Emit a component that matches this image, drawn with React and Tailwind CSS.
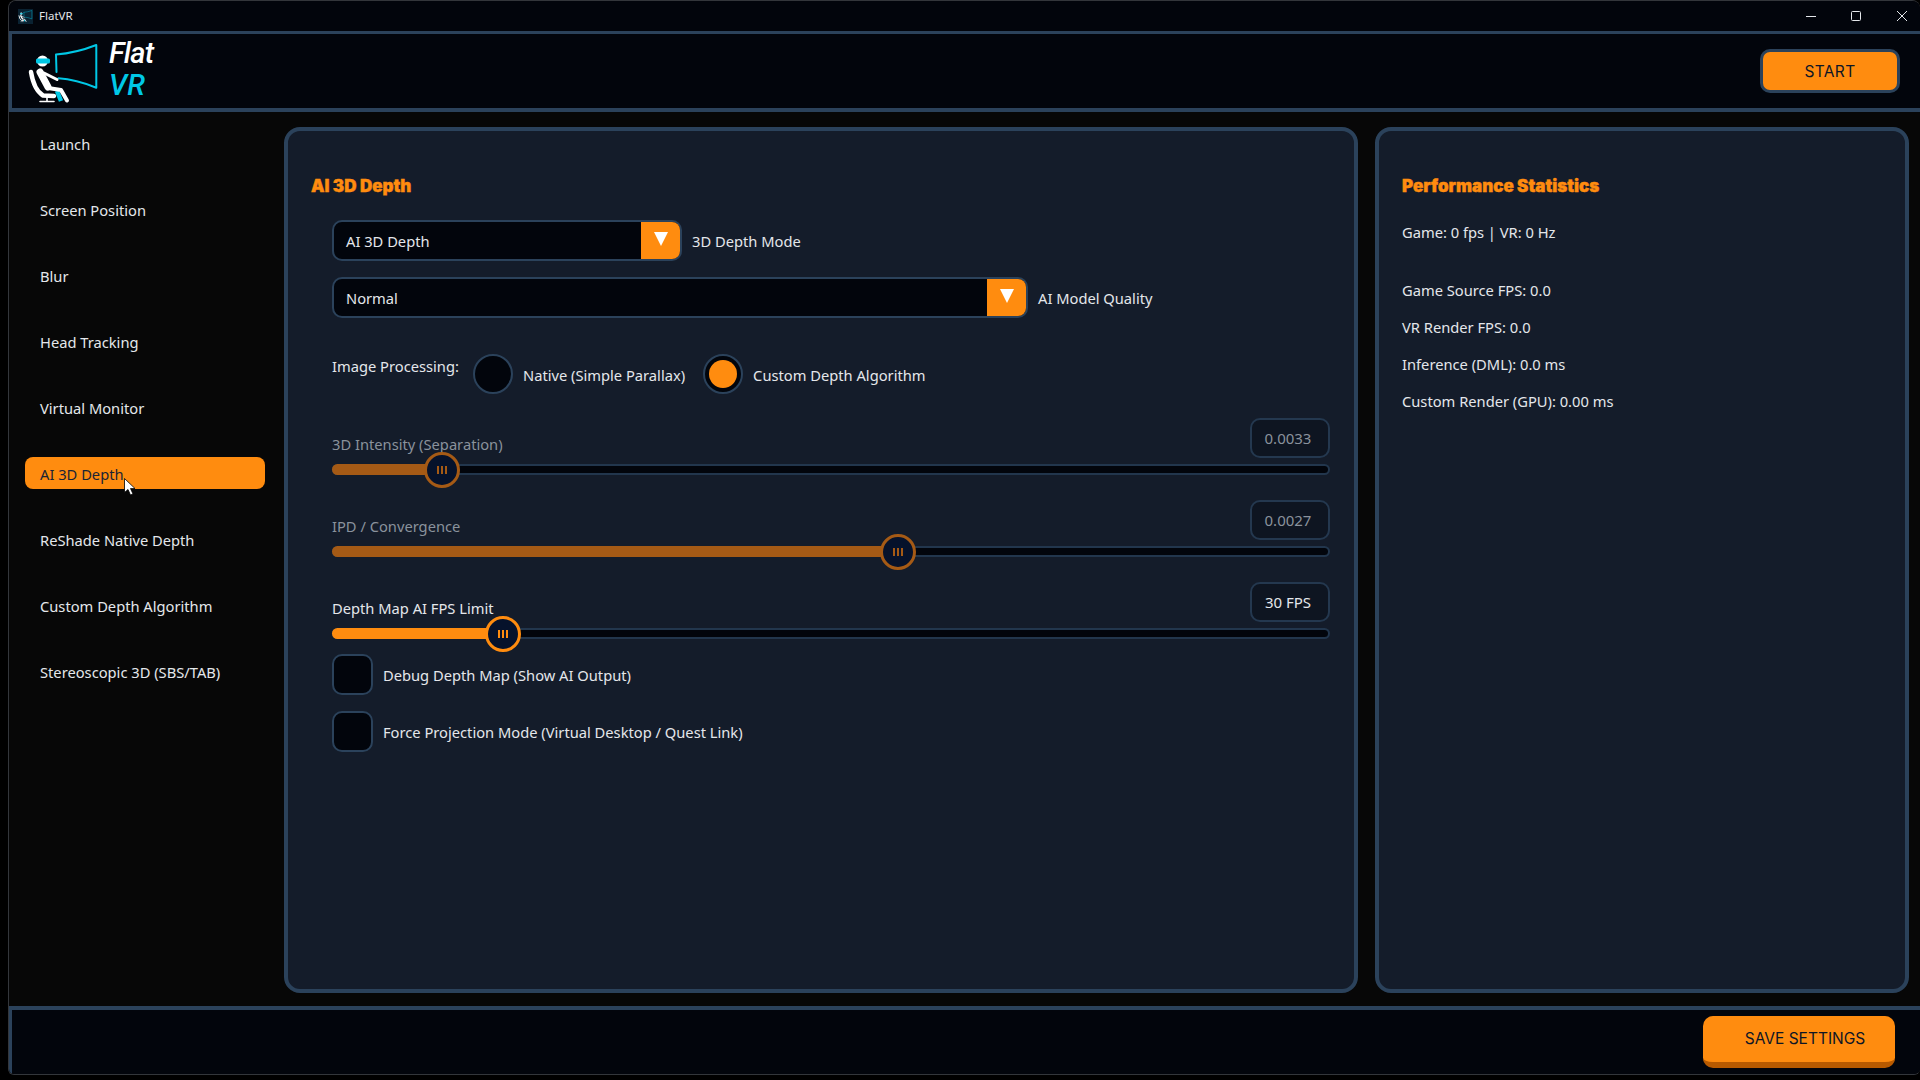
import React from 'react';

const navItems = [
  'Launch',
  'Screen Position',
  'Blur',
  'Head Tracking',
  'Virtual Monitor',
  'AI 3D Depth',
  'ReShade Native Depth',
  'Custom Depth Algorithm',
  'Stereoscopic 3D (SBS/TAB)',
];

const sliders = [
  { label: '3D Intensity (Separation)', value: '0.0033', pos: 110, disabled: true },
  { label: 'IPD / Convergence', value: '0.0027', pos: 566, disabled: true },
  { label: 'Depth Map AI FPS Limit', value: '30 FPS', pos: 171, disabled: false },
];

const Logo = ({ className }) => (
  <svg className={className} viewBox="0 0 76 64" fill="none">
    <path d="M30 13.5Q50 12 70.3 4V46.7Q50 38.5 32.5 37.3M30 13.5L30.5 31" stroke="#00c8e6" strokeWidth="2" strokeLinejoin="round" strokeLinecap="round" />
    <path d="M31 50L35 60" stroke="#00c8e6" strokeWidth="4.5" />
    <circle cx="16.5" cy="20" r="5.5" fill="#fff" />
    <rect x="10" y="17.5" width="14" height="5" rx="1.5" fill="#00c8e6" />
    <path d="M14 31L22 46" stroke="#fff" strokeWidth="7" strokeLinecap="round" />
    <path d="M18 32L31 38.5" stroke="#fff" strokeWidth="3" strokeLinecap="round" />
    <path d="M22 47L35 49L41 59.5" stroke="#fff" strokeWidth="4" strokeLinecap="round" strokeLinejoin="round" />
    <path d="M5 31Q8 49 17 54.5L28 55" stroke="#fff" strokeWidth="4.5" strokeLinecap="round" />
    <path d="M21 56V60M14 60.5H28" stroke="#fff" strokeWidth="1.6" strokeLinecap="round" />
  </svg>
);

const Dropdown = ({ text, width }) => (
  <div className={`flex h-[41px] ${width} overflow-hidden rounded-[10px] border-2 border-[#2b425b] bg-[#02050c]`}>
    <div className="flex flex-1 items-center pt-[2px] pl-3 text-[#e4e7eb]">{text}</div>
    <div className="flex w-[39px] items-center justify-center bg-[#ff8c0f]">
      <svg className="mb-1 h-[14px] w-[14px]" viewBox="0 0 14 14">
        <path d="M0 0H14L7 14Z" fill="#fff" />
      </svg>
    </div>
  </div>
);

const Radio = ({ checked }) => (
  <div className="flex h-10 w-10 items-center justify-center rounded-full border-2 border-[#2b425b] bg-[#02050c]">
    {checked && <div className="h-7 w-7 rounded-full bg-[#ff8c0f]" />}
  </div>
);

const Slider = ({ label, value, pos, disabled }) => (
  <div>
    <div className="flex items-end justify-between">
      <span className={`mb-1 leading-5 ${disabled ? 'text-[#8a929c]' : 'text-[#e4e7eb]'}`}>{label}</span>
      <div className={`flex h-10 w-20 items-center justify-center rounded-[10px] border-2 border-[#24384f] bg-[#0e1521] pr-1 text-[15px] ${disabled ? 'text-[#8a929c]' : 'text-[#e4e7eb]'}`}>
        {value}
      </div>
    </div>
    <div className="relative mt-[6px] h-[11px] rounded-full border-2 border-[#22364d] bg-[#02050c]">
      <div
        className={`absolute -top-[2px] -left-[2px] h-[11px] rounded-l-full ${disabled ? 'bg-[#a55a15]' : 'bg-[#ff8c0f]'}`}
        style={{ width: pos }}
      />
      <div
        className={`absolute -top-[14px] flex h-[36px] w-[36px] items-center justify-center gap-[2px] rounded-full border-[3px] bg-[#06122b] ${disabled ? 'border-[#a55a15]' : 'border-[#ff8c0f]'}`}
        style={{ left: pos - 20 }}
      >
        <i className={`block h-[8px] w-[2px] ${disabled ? 'bg-[#a55a15]' : 'bg-[#ff8c0f]'}`} />
        <i className={`block h-[8px] w-[2px] ${disabled ? 'bg-[#a55a15]' : 'bg-[#ff8c0f]'}`} />
        <i className={`block h-[8px] w-[2px] ${disabled ? 'bg-[#a55a15]' : 'bg-[#ff8c0f]'}`} />
      </div>
    </div>
  </div>
);

const Checkbox = ({ label }) => (
  <div className="flex items-center gap-[10px]">
    <div className="h-[41px] w-[41px] rounded-[10px] border-2 border-[#2b425b] bg-[#02050c]" />
    <span className="mt-[2px] text-[#e4e7eb]">{label}</span>
  </div>
);

export default function App() {
  return (
    <div className="h-[1080px] w-full overflow-hidden bg-black pb-[5px] pl-2 font-['Noto_Sans',sans-serif] text-[14.7px]">
      <div className="flex h-full flex-col overflow-hidden rounded-t-lg rounded-b-md border-t border-b border-l border-[#33363b] bg-[#070707]">
        {/* title bar */}
        <div className="flex h-[30px] shrink-0 items-center justify-between bg-[#02050c] pr-[13px] pl-[9px]">
          <div className="flex items-center gap-[6px]">
            <div className="flex h-[15px] w-[15px] items-center justify-center bg-[#0a2232]">
              <Logo className="h-[14px] w-[15px]" />
            </div>
            <span className="text-[11.5px] text-[#e4e7eb]">FlatVR</span>
          </div>
          <div className="flex items-center">
            <svg className="mr-[35px] h-[10px] w-[10px]" viewBox="0 0 10 10" stroke="#e4e7eb" fill="none">
              <path d="M0 5.5H10" />
            </svg>
            <svg className="mr-[36px] h-[10px] w-[10px]" viewBox="0 0 10 10" stroke="#e4e7eb" fill="none">
              <rect x="0.5" y="0.5" width="9" height="9" rx="1" />
            </svg>
            <svg className="h-[10px] w-[10px]" viewBox="0 0 10 10" stroke="#e4e7eb" fill="none">
              <path d="M0 0L10 10M10 0L0 10" />
            </svg>
          </div>
        </div>

        {/* header */}
        <div className="flex h-[81px] shrink-0 items-center justify-between border-t-[3px] border-b-4 border-l-[3px] border-[#2b425b] bg-[#02050c] pr-5">
          <div className="flex items-center">
            <Logo className="mt-[3px] ml-[14px] h-16 w-[76px]" />
            <div className="mb-[5px] ml-[7px] flex flex-col font-['Roboto',sans-serif] text-[29px] leading-8 font-medium italic">
              <span className="tracking-tight text-white">Flat</span>
              <span className="text-[#00c8e6]">VR</span>
            </div>
          </div>
          <button type="button" className="h-[44px] w-[140px] rounded-[10px] border-[3px] border-[#2b425b] bg-[#ff8c0f] pt-[2px] font-['Inter',sans-serif] text-[15.5px] font-normal tracking-wide text-[#0d1626]">
            START
          </button>
        </div>

        {/* body */}
        <div className="flex min-h-0 flex-1 pt-[15px] pr-[11px] pb-[13px]">
          <nav className="flex w-[275px] shrink-0 flex-col gap-[34px] pl-4">
            {navItems.map(item => (
              <div
                key={item}
                className={`relative flex h-8 w-60 items-center rounded-lg pt-[2px] pl-[15px] ${item === 'AI 3D Depth' ? 'bg-[#ff8c0f] text-[#1a2436]' : 'text-[#e4e7eb]'}`}
              >
                {item}
                {item === 'AI 3D Depth' && (
                  <svg className="absolute top-[21px] left-[99px] h-[18px] w-[12px]" viewBox="0 0 12 18">
                    <path d="M0.5 0.5V14.5L4 11.5L6.5 17L9 16L6.5 10.5H11Z" fill="#fff" stroke="#000" strokeWidth="0.8" />
                  </svg>
                )}
              </div>
            ))}
          </nav>

          {/* main panel */}
          <div className="flex w-[1074px] shrink-0 flex-col rounded-2xl border-4 border-[#2b425b] bg-[#141c2a] pt-[45px] pr-6 pl-[23px]">
            <h2 className="font-['Inter',sans-serif] text-[17px] leading-5 font-black text-[#ff8c0f] [-webkit-text-stroke:0.4px_#ff8c0f]">AI 3D Depth</h2>
            <div className="flex flex-col pl-[21px]">
              <div className="mt-[24px] flex items-center gap-[10px]">
                <Dropdown text="AI 3D Depth" width="w-[350px]" />
                <span className="mt-[2px] text-[#e4e7eb]">3D Depth Mode</span>
              </div>
              <div className="mt-4 flex items-center gap-[10px]">
                <Dropdown text="Normal" width="w-[696px]" />
                <span className="mt-[2px] text-[#e4e7eb]">AI Model Quality</span>
              </div>
              <div className="mt-[36px] flex h-10 items-center text-[#e4e7eb]">
                <span className="mb-4 w-[141px]">Image Processing:</span>
                <Radio />
                <span className="mt-[2px] mr-[18px] ml-[10px]">Native (Simple Parallax)</span>
                <Radio checked />
                <span className="mt-[2px] ml-[10px]">Custom Depth Algorithm</span>
              </div>
              <div className="mt-[24px] flex flex-col gap-[25px]">
                {sliders.map(s => (
                  <Slider key={s.label} {...s} />
                ))}
              </div>
              <div className="mt-[15px] flex flex-col gap-4">
                <Checkbox label="Debug Depth Map (Show AI Output)" />
                <Checkbox label="Force Projection Mode (Virtual Desktop / Quest Link)" />
              </div>
            </div>
          </div>

          {/* stats panel */}
          <div className="ml-[17px] flex flex-1 flex-col rounded-2xl border-4 border-[#2b425b] bg-[#141c2a] pt-[45px] pl-[23px] text-[#e4e7eb]">
            <h2 className="font-['Inter',sans-serif] text-[17px] leading-5 font-black text-[#ff8c0f] [-webkit-text-stroke:0.4px_#ff8c0f]">Performance Statistics</h2>
            <p className="mt-[26px] leading-5">Game: 0 fps | VR: 0 Hz</p>
            <div className="mt-[38px] flex flex-col gap-[17px] leading-5">
              <p>Game Source FPS: 0.0</p>
              <p>VR Render FPS: 0.0</p>
              <p>Inference (DML): 0.0 ms</p>
              <p>Custom Render (GPU): 0.00 ms</p>
            </div>
          </div>
        </div>

        {/* footer */}
        <div className="flex h-[68px] shrink-0 items-center justify-end border-t-4 border-l-[3px] border-[#2b425b] bg-[#02050c] pr-[25px]">
          <button type="button" className="h-[52px] w-[192px] rounded-[10px] border-b-[6px] border-[#b85a00] bg-[#ff8c0f] pl-3 font-['Inter',sans-serif] text-[15.5px] font-normal text-[#0d1626]">
            SAVE SETTINGS
          </button>
        </div>
      </div>
    </div>
  );
}
